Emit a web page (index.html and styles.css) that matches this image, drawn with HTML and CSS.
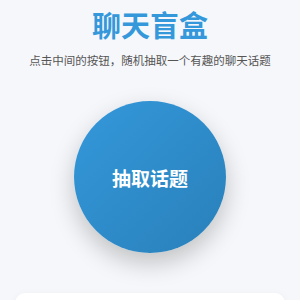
FILE: index.html
```html
<!DOCTYPE html>
<html lang="zh">
<head>
<meta charset="utf-8">
<link rel="stylesheet" href="styles.css">
</head>
<body>
<div class="page">
  <h1 class="title">聊天盲盒</h1>
  <p class="subtitle">点击中间的按钮，随机抽取一个有趣的聊天话题</p>
  <div class="btn-wrap">
    <button class="draw-btn">抽取话题</button>
  </div>
  <div class="card"></div>
</div>
</body>
</html>
```
FILE: styles.css
```css
html, body {
  margin: 0;
  padding: 0;
  background: #f5f7fa;
  font-family: "Noto Sans CJK SC", "Noto Sans", sans-serif;
}
.page {
  display: flex;
  flex-direction: column;
  align-items: center;
  padding: 7px 15px 0;
}
.title {
  margin: 0;
  font-size: 29px;
  line-height: 34px;
  font-weight: 700;
  color: #3498db;
}
.subtitle {
  margin: 11px 0 0;
  font-size: 11.5px;
  line-height: 16px;
  color: #555;
}
.btn-wrap {
  margin-top: 33px;
  display: flex;
  justify-content: center;
}
.draw-btn {
  width: 152px;
  height: 152px;
  border: none;
  border-radius: 50%;
  background: linear-gradient(135deg, #3498db, #2980b9);
  color: #fff;
  font-family: "Noto Sans CJK SC", sans-serif;
  font-size: 19px;
  font-weight: 700;
  box-shadow: 0 10px 25px rgba(0, 0, 0, 0.22);
  padding: 0;
}
.card {
  align-self: stretch;
  margin-top: 40px;
  height: 60px;
  background: #fff;
  border-radius: 10px;
  box-shadow: 0 2px 8px rgba(0, 0, 0, 0.05);
}
```
